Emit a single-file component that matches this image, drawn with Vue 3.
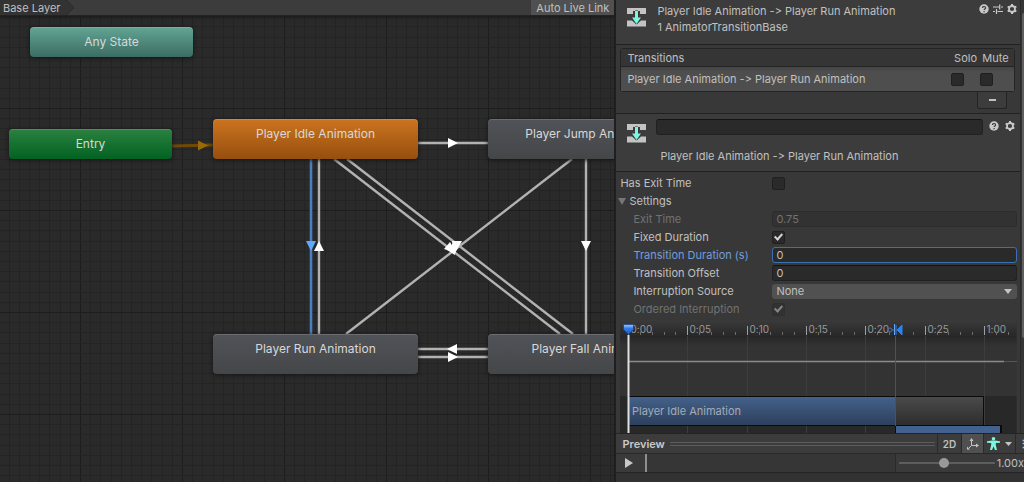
<script setup>
import { ref } from 'vue'

const states = [
  { id: 'any', label: 'Any State', x: 30, y: 27, kind: 'any' },
  { id: 'entry', label: 'Entry', x: 9, y: 129, kind: 'entry' },
  { id: 'idle', label: 'Player Idle Animation', x: 213, y: 119, kind: 'motion default' },
  { id: 'jump', label: 'Player Jump Animation', x: 488, y: 119, kind: 'motion' },
  { id: 'run', label: 'Player Run Animation', x: 213, y: 334, kind: 'motion' },
  { id: 'fall', label: 'Player Fall Animation', x: 488, y: 334, kind: 'motion' },
]

const links = [
  [319, 159, 319, 334],
  [418, 143, 488, 143],
  [334, 159, 560, 334],
  [347, 159, 573, 334],
  [572, 159, 346, 334],
  [586, 159, 586, 334],
  [418, 349, 488, 349],
  [418, 357, 488, 357],
]

const arrows = [
  '314,251 324,251 319,241',
  '448,138 448,148 458,143',
  '581,241 591,241 586,251',
  '457,344 457,354 447,349',
  '448,352 448,362 458,357',
  '444,249 450,242 456,253',
  '452,241 462,241 454,255',
  '447,250 453,243 455,255',
]

const gridLines = (origin, count) =>
  Array.from({ length: count }, (_, i) => ({
    at: Math.round(origin + i * 10.2) + 0.5,
    major: i % 10 === 0,
  }))
const columns = gridLines(-22, 200)
const rows = gridLines(6, 150)

const ticks = Array.from({ length: 33 }, (_, i) => ({
  x: Math.round(8 + i * 11.87) + 0.5,
  major: i % 5 === 0,
  label: `${Math.floor(i / 30)}:${String(i % 30).padStart(2, '0')}`,
}))

const title = 'Player Idle Animation -> Player Run Animation'
const solo = ref(false)
const mute = ref(false)
const name = ref('')
const hasExitTime = ref(false)
const exitTime = ref('0.75')
const fixedDuration = ref(true)
const duration = ref('0')
const offset = ref('0')
const source = ref('None')
const ordered = ref(true)
const speed = ref(47)
</script>

<template>
  <main class="editor">
    <section class="animator">
      <header class="crumbs">
        <button class="crumb">Base Layer</button>
        <svg class="chevron" width="10" height="15" viewBox="0 0 10 15">
          <path d="M0 0L8 7.5L0 15" fill="#333" stroke="#2a2a2a" />
        </svg>
        <button class="live">Auto Live Link</button>
      </header>
      <div class="canvas">
        <svg class="wires" width="100%" height="100%">
          <line v-for="c in columns" :key="'c' + c.at" :x1="c.at" :x2="c.at" y1="0" y2="100%" :stroke="c.major ? '#1d1d1d' : '#242424'" />
          <line v-for="r in rows" :key="'r' + r.at" :y1="r.at" :y2="r.at" x1="0" x2="100%" :stroke="r.major ? '#1d1d1d' : '#242424'" />
          <line x1="172" y1="146" x2="213" y2="145" stroke="#6f4a06" stroke-width="3" />
          <polygon points="198,140.500 198,150.500 208,145.500" fill="#9b6907" />
          <line x1="311" y1="159" x2="311" y2="334" stroke="#4a7fbd" stroke-width="2.600" />
          <line v-for="(l, i) in links" :key="i" :x1="l[0]" :y1="l[1]" :x2="l[2]" :y2="l[3]" stroke="#b2b2b2" stroke-width="2.400" />
          <polygon points="306,241 316,241 311,251" fill="#62a8fa" />
          <polygon v-for="a in arrows" :key="a" :points="a" fill="#fff" />
        </svg>
        <div
          v-for="s in states"
          :key="s.id"
          class="node"
          :class="s.kind"
          :style="{ left: s.x + 'px', top: s.y + 'px' }"
        >{{ s.label }}</div>
      </div>
    </section>

    <aside class="inspector">
      <div class="scroller">
        <div class="content">
          <header class="head">
            <svg class="asset" width="20" height="20" viewBox="0 0 20 20">
              <path d="M1 1h19v6h-6V4H7v3H1z M1 13.500h5l4.500 4 4.500-4h5v6H1z" fill="#c4c4c4" />
              <path d="M9 4h3v6.500h3l-4.500 6.500L6 10.500h3z" fill="#7df5df" stroke="#333" stroke-width="1" paint-order="stroke" />
            </svg>
            <div class="titles">
              <div>{{ title }}</div>
              <div>1 AnimatorTransitionBase</div>
            </div>
            <div class="tools">
              <button class="tool" aria-label="Help">
                <svg width="10" height="10" viewBox="0 0 10 10"><circle cx="5" cy="5" r="4.700" fill="#c9c9c9" /><path d="M3.500 3.900C3.500 2 6.600 2 6.600 3.900C6.600 5 5.100 4.900 5.100 6.100M5.100 7v1.200" fill="none" stroke="#383838" stroke-width="1.200" /></svg>
              </button>
              <button class="tool" aria-label="Presets">
                <svg width="10" height="10" viewBox="0 0 10 10"><path d="M0 3h6M8 3h2M6.700 .5v5M0 7.500h2M4.500 7.500H10M3.500 5v5" fill="none" stroke="#c9c9c9" stroke-width="1.200" /></svg>
              </button>
              <button class="tool" aria-label="Options">
                <svg width="10" height="10" viewBox="0 0 10 10"><circle cx="5" cy="5" r="3" fill="none" stroke="#c9c9c9" stroke-width="1.800" /><path d="M5 0v2M5 8v2M.7 2.500l1.700 1M7.600 6.500l1.700 1M.7 7.500l1.700-1M7.600 3.500l1.700-1" stroke="#c9c9c9" stroke-width="2" /></svg>
              </button>
            </div>
          </header>

          <section class="list">
            <table>
              <thead>
                <tr><th class="wide">Transitions</th><th class="solo">Solo</th><th class="mute">Mute</th></tr>
              </thead>
              <tbody>
                <tr>
                  <td class="wide">{{ title }}</td>
                  <td class="solo"><input v-model="solo" type="checkbox" aria-label="Solo" /></td>
                  <td class="mute"><input v-model="mute" type="checkbox" aria-label="Mute" /></td>
                </tr>
              </tbody>
            </table>
            <button class="remove" aria-label="Remove transition"><span></span></button>
          </section>

          <section class="head second">
            <svg class="asset" width="20" height="20" viewBox="0 0 20 20">
              <path d="M1 1h19v6h-6V4H7v3H1z M1 13.500h5l4.500 4 4.500-4h5v6H1z" fill="#c4c4c4" />
              <path d="M9 4h3v6.500h3l-4.500 6.500L6 10.500h3z" fill="#7df5df" stroke="#333" stroke-width="1" paint-order="stroke" />
            </svg>
            <div class="naming">
              <input v-model="name" class="field" type="text" aria-label="Transition name" />
              <div class="caption">{{ title }}</div>
            </div>
            <div class="tools">
              <button class="tool" aria-label="Help">
                <svg width="10" height="10" viewBox="0 0 10 10"><circle cx="5" cy="5" r="4.700" fill="#c9c9c9" /><path d="M3.500 3.900C3.500 2 6.600 2 6.600 3.900C6.600 5 5.100 4.900 5.100 6.100M5.100 7v1.200" fill="none" stroke="#383838" stroke-width="1.200" /></svg>
              </button>
              <button class="tool" aria-label="Options">
                <svg width="10" height="10" viewBox="0 0 10 10"><circle cx="5" cy="5" r="3" fill="none" stroke="#c9c9c9" stroke-width="1.800" /><path d="M5 0v2M5 8v2M.7 2.500l1.700 1M7.600 6.500l1.700 1M.7 7.500l1.700-1M7.600 3.500l1.700-1" stroke="#c9c9c9" stroke-width="2" /></svg>
              </button>
            </div>
          </section>

          <section class="props">
            <div class="prop">
              <label for="exit">Has Exit Time</label>
              <input id="exit" v-model="hasExitTime" type="checkbox" />
            </div>
            <button class="foldout">
              <svg width="8" height="7" viewBox="0 0 8 7"><path d="M0 0h8L4 7z" fill="#777" /></svg>
              Settings
            </button>
            <div class="prop nested off">
              <label for="time">Exit Time</label>
              <input id="time" v-model="exitTime" class="field" type="text" disabled />
            </div>
            <div class="prop nested">
              <label for="fixed">Fixed Duration</label>
              <input id="fixed" v-model="fixedDuration" type="checkbox" />
            </div>
            <div class="prop nested active">
              <label for="duration">Transition Duration (s)</label>
              <input id="duration" v-model="duration" class="field" type="text" />
            </div>
            <div class="prop nested">
              <label for="offset">Transition Offset</label>
              <input id="offset" v-model="offset" class="field" type="text" />
            </div>
            <div class="prop nested">
              <label for="source">Interruption Source</label>
              <div class="picker">
                <select id="source" v-model="source"><option>None</option></select>
                <svg width="8" height="5" viewBox="0 0 8 5"><path d="M0 0h8L4 5z" fill="#c4c4c4" /></svg>
              </div>
            </div>
            <div class="prop nested off">
              <label for="ordered">Ordered Interruption</label>
              <input id="ordered" v-model="ordered" type="checkbox" disabled />
            </div>
          </section>

          <div class="timeline">
            <svg width="100%" height="150">
              <defs>
                <linearGradient id="ruler" x2="0" y2="1"><stop offset="0" stop-color="#3a3a3a" /><stop offset="1" stop-color="#282828" /></linearGradient>
                <linearGradient id="shade" x2="0" y2="1"><stop offset="0" stop-color="#262626" /><stop offset="1" stop-color="#333" /></linearGradient>
                <linearGradient id="clip" x2="0" y2="1"><stop offset="0" stop-color="#44618a" /><stop offset="1" stop-color="#2d405c" /></linearGradient>
                <linearGradient id="tail" x2="0" y2="1"><stop offset="0" stop-color="#4a4a4a" /><stop offset="1" stop-color="#2d2d2d" /></linearGradient>
                <linearGradient id="pin" x2="0" y2="1"><stop offset="0" stop-color="#a9cdfb" /><stop offset=".4" stop-color="#2f7cec" /><stop offset="1" stop-color="#1759d0" /></linearGradient>
              </defs>
              <rect width="100%" height="76" fill="#333" />
              <rect width="100%" height="16" fill="url(#ruler)" />
              <rect y="16" width="100%" height="10" fill="url(#shade)" />
              <rect y="76" width="100%" height="80" fill="#282828" />
              <template v-for="t in ticks" :key="t.x">
                <line v-if="t.major" :x1="t.x" :x2="t.x" y1="16" y2="150" stroke="#3d3d3d" />
                <line :x1="t.x" :x2="t.x" :y1="t.major ? 6 : 12" y2="15" :stroke="t.major ? '#a0a0a0' : '#6c6c6c'" />
                <text v-if="t.major" :x="t.x + 2" y="13" class="time">{{ t.label }}</text>
              </template>
              <path d="M8 41.500H384" stroke="#8b8b8b" stroke-width="1.500" />
              <path d="M384 41.500H397" stroke="#555" />
              <rect x="8" y="76" width="356" height="30" fill="#0b0b0b" />
              <rect x="9" y="77" width="267" height="28" fill="url(#clip)" />
              <rect x="276" y="77" width="87" height="28" fill="url(#tail)" />
              <rect x="275" y="105" width="107" height="40" fill="#0b0b0b" />
              <rect x="276" y="106" width="104" height="40" fill="#43618f" />
              <text x="12" y="95" class="clip-name">Player Idle Animation</text>
              <path d="M275.500 16V106" stroke="#36538a" />
              <path d="M274.500 4v11" stroke="#69a4f2" />
              <path d="M282 5v10l-5-5z M276 5v10" fill="#2d83ef" stroke="#2d83ef" />
              <circle cx="270" cy="10" r="2" fill="none" stroke="#3975be" /><path d="M272 10h2" stroke="#3975be" />
              <path d="M8.500 15V150" stroke="#e0e0e0" stroke-width="2" />
              <path d="M3.500 4.500h10v5l-5 5-5-5z" fill="url(#pin)" stroke="#1c3f78" stroke-width=".7" />
            </svg>
          </div>
        </div>
        <div class="gutter"><div class="thumb"></div></div>
      </div>

      <footer class="preview">
        <div class="preview-bar">
          <strong>Preview</strong>
          <div class="grip"></div>
          <button class="mode two-d">2D</button>
          <button class="mode pivot" aria-label="Pivot">
            <svg width="12" height="12" viewBox="0 0 12 12"><path d="M4.500 2v5.500H10M4.500 7.500L2 10" fill="none" stroke="#c4c4c4" /><path d="M2.500 3L4.500 0l2 3zM9 5.500l3 2-3 2zM0 8.500v3h3z" fill="#c4c4c4" /></svg>
          </button>
          <button class="mode avatar" aria-label="Avatar">
            <svg width="13" height="13" viewBox="0 0 13 13"><circle cx="6.500" cy="1.800" r="1.800" fill="#7df5df" /><path d="M0 4.300L5 3.500h3l5 .8v1.500L8.800 6v2l1.200 5H8L6.500 9.500 5 13H3l1.200-5V6L0 5.800z" fill="#7df5df" /></svg>
            <svg width="7" height="4" viewBox="0 0 7 4"><path d="M0 0h7L3.500 4z" fill="#c4c4c4" /></svg>
          </button>
          <button class="more" aria-label="More">⋮</button>
        </div>
        <div class="transport">
          <button class="play" aria-label="Play">
            <svg width="8" height="10" viewBox="0 0 8 10"><path d="M0 0l8 5-8 5z" fill="#c9c9c9" /></svg>
          </button>
          <div class="scrub"></div>
          <label class="speed">
            <input v-model="speed" type="range" min="0" max="100" aria-label="Speed" />
            <span>1.00x</span>
          </label>
        </div>
      </footer>
    </aside>
  </main>
</template>

<style>
body {
  background: #383838;
}
</style>

<style scoped>
.editor {
  display: grid;
  grid-template-columns: minmax(0, 1fr) minmax(0, 40%);
  height: 100vh;
  overflow: hidden;
  color: #c0c0c0;
  font: 11px/14px Inter, "Open Sans", sans-serif;
  font-feature-settings: "calt" 0;
}
.editor * {
  box-sizing: border-box;
}
button,
input,
select {
  margin: 0;
  padding: 0;
  border: 0;
  background: none;
  color: inherit;
  font: inherit;
  outline: none;
}
svg {
  display: block;
  flex: none;
}

.animator {
  position: relative;
  overflow: hidden;
  background: #2a2a2a;
}
.crumbs {
  position: relative;
  z-index: 1;
  display: flex;
  height: 16px;
  background: #3c3c3c;
  border-bottom: 1px solid #232323;
  box-shadow: 0 1px 4px #1a1a1a;
}
.crumb {
  padding: 0 6px 0 3px;
  background: #333;
}
.live {
  margin-left: auto;
  padding: 0 5px;
  background: #505050;
}
.canvas {
  position: absolute;
  inset: 0;
}
.node {
  position: absolute;
  display: flex;
  align-items: center;
  justify-content: center;
  width: 163px;
  height: 30px;
  border-radius: 4px;
  color: #d8d8d8;
  font-size: 12px;
  white-space: nowrap;
  box-shadow: 0 1px 4px #151515, inset 0 1px 0 rgba(255, 255, 255, 0.15);
}
.any {
  background: linear-gradient(#62a593, #3b6c64);
}
.entry {
  background: linear-gradient(#2b8140, #026222);
}
.motion {
  width: 205px;
  height: 40px;
  padding-bottom: 10px;
  background: linear-gradient(#505358, #454648);
}
.default {
  background: linear-gradient(#cb7420, #964f0e);
}

.inspector {
  display: flex;
  flex-direction: column;
  min-width: 0;
  min-height: 0;
  border-left: 2px solid #1f1f1f;
  background: #383838;
}
.scroller {
  display: flex;
  flex: 1;
  min-height: 0;
  overflow: hidden;
}
.content {
  flex: 1;
  min-width: 0;
}
.gutter {
  width: 4px;
  padding-top: 13px;
  background: #353535;
  border-left: 1px solid #2a2a2a;
}
.thumb {
  height: 325px;
  margin-left: 1px;
  border-radius: 2px 0 0 2px;
  background: #5e5e5e;
}
.head {
  display: flex;
  align-items: flex-start;
  height: 45px;
  padding-left: 10px;
  background: #3c3c3c;
  border-bottom: 1px solid #212121;
}
.asset {
  margin: 7px 11px 0 0;
}
.titles {
  flex: 1;
  padding-top: 3px;
  line-height: 16px;
  white-space: nowrap;
}
.tools {
  display: flex;
  gap: 4px;
  padding: 4px 3px 0 0;
}
.tool {
  width: 10px;
  height: 10px;
}
.list {
  height: 69px;
  padding: 3px 5px 0 4px;
  border-bottom: 1px solid #212121;
}
table {
  width: 100%;
  border: 1px solid #242424;
  border-radius: 3px;
  border-collapse: separate;
  border-spacing: 0;
  table-layout: fixed;
}
th,
td {
  padding: 0;
  font-weight: 400;
  text-align: center;
  white-space: nowrap;
}
th {
  height: 18px;
  background: #353535;
  border-bottom: 1px solid #242424;
}
td {
  height: 24px;
  background: linear-gradient(#454545, #4e4e4e 6px);
}
.wide {
  padding-left: 6px;
  text-align: left;
}
.solo {
  width: 36px;
}
.mute {
  width: 37px;
}
th.solo {
  text-align: right;
}
td.solo {
  padding-right: 3px;
}
td.mute {
  padding-right: 18px;
}
[type="checkbox"] {
  display: inline-grid;
  place-items: center;
  width: 13px;
  height: 13px;
  appearance: none;
  border: 1px solid #1f1f1f;
  border-radius: 2px;
  background: #2a2a2a;
  vertical-align: middle;
}
[type="checkbox"]:checked::after {
  width: 3px;
  height: 6px;
  margin-bottom: 2px;
  border: solid #d2d2d2;
  border-width: 0 2px 2px 0;
  content: "";
  transform: rotate(42deg);
}
[type="checkbox"]:disabled {
  border-color: #2e2e2e;
  background: #323232;
}
[type="checkbox"]:disabled::after {
  border-color: #858585;
}
.remove {
  display: grid;
  place-items: center;
  width: 30px;
  height: 17px;
  margin: 0 8px 0 auto;
  border: 1px solid #242424;
  border-top: 0;
  border-radius: 0 0 3px 3px;
  background: #3c3c3c;
}
.remove span {
  width: 7px;
  height: 2px;
  background: #c0c0c0;
}
.second {
  height: 58px;
}
.second .asset {
  margin-top: 9px;
  margin-right: 10px;
}
.second .tools {
  gap: 6px;
  padding: 7px 5px 0 6px;
}
.naming {
  display: flex;
  flex: 1;
  flex-direction: column;
  gap: 14px;
  padding-top: 5px;
}
.caption {
  padding-left: 4px;
  white-space: nowrap;
}
.field {
  width: 100%;
  height: 16px;
  padding: 0 3px;
  border: 1px solid #212121;
  border-top-color: #141414;
  border-radius: 3px;
  background: #2a2a2a;
  line-height: 14px;
}
.props {
  display: flex;
  flex-direction: column;
  padding: 2px 3px 2px 4px;
}
.prop {
  display: grid;
  grid-template-columns: 152px minmax(0, 1fr);
  align-items: center;
  height: 18px;
}
.nested label {
  padding-left: 13px;
}
.off {
  color: #727272;
}
.off .field {
  border-color: #2c2c2c;
  background: #323232;
}
.active label {
  color: #719ddb;
}
.active .field {
  border-color: #3a72b0;
}
.foldout {
  display: flex;
  align-items: center;
  gap: 3px;
  height: 18px;
  margin-left: -2px;
}
.picker {
  display: flex;
  align-items: center;
  height: 15px;
  padding-right: 5px;
  border-radius: 3px;
  background: #515151;
}
select {
  flex: 1;
  height: 15px;
  padding-left: 4px;
  appearance: none;
}
.timeline {
  margin: 0 3px 0 4px;
}
.time {
  fill: #999;
  font-size: 10px;
}
.clip-name {
  fill: #a3abb8;
}

.preview {
  border-top: 1px solid #242424;
  background: #323232;
  min-height: 49px;
}
.preview-bar {
  display: flex;
  align-items: center;
  height: 19px;
  padding-left: 6px;
  background: #3c3c3c;
  overflow: hidden;
}
strong {
  font-weight: 600;
  color: #cacaca;
}
.grip {
  flex: 1;
  height: 4px;
  margin: 0 2px 0 5px;
  border: solid #5c5c5c;
  border-width: 1px 0;
}
.mode {
  display: flex;
  align-items: center;
  justify-content: center;
  gap: 5px;
  height: 19px;
  border-left: 1px solid #2a2a2a;
}
.two-d {
  width: 24px;
  font-size: 10px;
  font-weight: 600;
}
.pivot {
  width: 22px;
  background: #505050;
}
.avatar {
  width: 33px;
  border-right: 1px solid #2a2a2a;
}
.more {
  width: 8px;
  padding-left: 2px;
  font-weight: 700;
}
.transport {
  display: flex;
  height: 20px;
  border-top: 1px solid #282828;
  border-bottom: 1px solid #242424;
  background: #363636;
}
.play {
  display: grid;
  place-items: center;
  width: 29px;
  padding-right: 3px;
  background: #3a3a3a;
}
.scrub {
  flex: 1;
  border-left: 2px solid #8f8f8f;
}
.speed {
  display: flex;
  align-items: center;
  gap: 2px;
  padding-left: 3px;
  border-left: 1px solid #2a2a2a;
  background: #3a3a3a;
}
[type="range"] {
  width: 96px;
  height: 10px;
  appearance: none;
  background: linear-gradient(#5e5e5e, #5e5e5e) center / 100% 2px no-repeat;
}
[type="range"]::-webkit-slider-thumb {
  width: 10px;
  height: 10px;
  appearance: none;
  border-radius: 50%;
  background: #999;
}
</style>
